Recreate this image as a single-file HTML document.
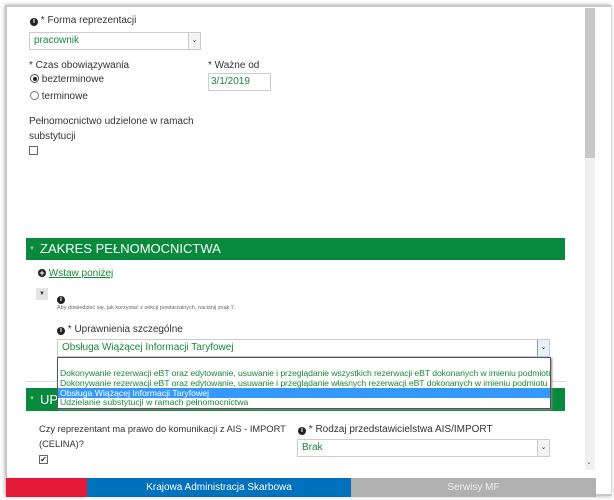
<!DOCTYPE html>
<html><head><meta charset="utf-8"><style>
*{margin:0;padding:0;box-sizing:border-box}
body{width:614px;height:500px;background:#fff;position:relative;overflow:hidden;font-family:"Liberation Sans",Arial,sans-serif;font-size:10px;color:#333}
.a{position:absolute;white-space:nowrap}
.frame{left:5px;top:5px;width:606px;height:491px;border:2px solid #c8c8c8;border-right:none;box-shadow:0 0 4px #aaa}
.info{display:inline-block;width:8px;height:8px;border-radius:50%;background:#222;color:#fff;font-size:7px;line-height:8px;text-align:center;font-weight:bold;vertical-align:0}
.sel{border:1px solid #ccc;background:#fff;color:#1a8a3a;padding-left:4px;line-height:16px}
.arr{position:absolute;right:0;top:0;width:12px;height:100%;border-left:1px solid #ccc;background:#f4f4f4;font-size:7px;text-align:center;color:#333}
.bar{background:#078a3c;color:#fff;font-size:13px;line-height:22px;padding-left:14px}
.g{color:#1a8a3a}
</style></head><body>
<div class="a frame"></div>
<div class="a" style="left:30px;top:15px"><span class="info">i</span> * Forma reprezentacji</div>
<div class="a sel" style="left:29px;top:32px;width:172px;height:18px">pracownik<div class="arr">&#8964;</div></div>
<div class="a" style="left:29px;top:60px">* Czas obowiązywania</div>
<div class="a" style="left:30px;top:74px"><span style="display:inline-block;width:9px;height:9px;border:1px solid #555;border-radius:50%;position:relative;vertical-align:-1px"><span style="position:absolute;left:1.5px;top:1.5px;width:4px;height:4px;border-radius:50%;background:#222"></span></span> bezterminowe</div>
<div class="a" style="left:30px;top:91px"><span style="display:inline-block;width:9px;height:9px;border:1px solid #777;border-radius:50%;vertical-align:-1px"></span> terminowe</div>
<div class="a" style="left:208px;top:60px">* Ważne od</div>
<div class="a sel" style="left:208px;top:73px;width:63px;height:18px;padding-left:2px">3/1/2019</div>
<div class="a" style="left:29px;top:114px;line-height:15px">Pełnomocnictwo udzielone w ramach<br>substytucji</div>
<div class="a" style="left:29px;top:146px;width:9px;height:9px;border:1px solid #666"></div>
<div class="a bar" style="left:26px;top:238px;width:539px;height:22px"><span style="font-size:6px;color:#9c9;position:absolute;left:3px">&#9660;</span>ZAKRES PEŁNOMOCNICTWA</div>
<div class="a" style="left:38px;top:268px"><span class="info" style="font-size:9px">+</span> <span class="g" style="text-decoration:underline">Wstaw poniżej</span></div>
<div class="a" style="left:36px;top:288px;width:12px;height:12px;background:#e4e4e4;font-size:6px;text-align:center;line-height:12px">&#9660;</div>
<div class="a" style="left:57px;top:293px"><span class="info">i</span></div>
<div class="a" style="left:57px;top:305px;font-size:5.5px;color:#666">Aby dowiedzieć się, jak korzystać z sekcji powtarzalnych, naciśnij znak 'i'.</div>
<div class="a" style="left:57px;top:324px"><span class="info">i</span> * Uprawnienia szczególne</div>
<div class="a sel" style="left:57px;top:339px;width:493px;height:18px;line-height:16px">Obsługa Wiążącej Informacji Taryfowej<div class="arr" style="background:#e8f0ff;border-color:#7aa">&#8964;</div></div>
<div class="a" style="left:26px;top:381px;width:540px;border-top:1px solid #ddd"></div>
<div class="a" style="left:26px;top:388px;width:539px;height:23px;background:#078a3c;color:#fff;font-size:13px;line-height:23px;padding-left:14px"><span style="font-size:6px;color:#9c9;position:absolute;left:3px">&#9660;</span>UP</div>
<div class="a" style="left:57px;top:357px;width:494px;height:52px;background:#fff;border:1px solid #555;color:#1a8a3a;font-size:8.7px;line-height:9.5px;padding-top:11px;box-shadow:1px 1px 2px #888;overflow:hidden">
<div style="padding-left:2px;letter-spacing:-0.1px">Dokonywanie rezerwacji eBT oraz edytowanie, usuwanie i przeglądanie wszystkich rezerwacji eBT dokonanych w imieniu podmiotu</div>
<div style="padding-left:2px;letter-spacing:-0.1px">Dokonywanie rezerwacji eBT oraz edytowanie, usuwanie i przeglądanie własnych rezerwacji eBT dokonanych w imieniu podmiotu</div>
<div style="padding-left:2px;background:#3399ff;color:#fff;height:10px;line-height:10px">Obsługa Wiążącej Informacji Taryfowej</div>
<div style="padding-left:2px">Udzielanie substytucji w ramach pełnomocnictwa</div>
</div>
<div class="a" style="left:39px;top:422px;line-height:15px;font-size:9.3px">Czy reprezentant ma prawo do komunikacji z AIS - IMPORT<br>(CELINA)?</div>
<div class="a" style="left:39px;top:455px;width:9px;height:9px;border:1px solid #666;font-size:8px;line-height:7px;text-align:center">&#10004;</div>
<div class="a" style="left:298px;top:424px"><span class="info">i</span> * Rodzaj przedstawicielstwa AIS/IMPORT</div>
<div class="a sel" style="left:297px;top:439px;width:253px;height:18px">Brak<div class="arr">&#8964;</div></div>
<div class="a" style="left:585px;top:8px;width:10px;height:462px;background:#f0f0f0"></div>
<div class="a" style="left:585px;top:8px;width:10px;height:150px;background:#c8c8c8"></div>
<div class="a" style="left:586px;top:458px;font-size:7px;color:#666">&#8964;</div>
<div class="a" style="left:6px;top:478px;width:81px;height:19px;background:#e31937"></div>
<div class="a" style="left:87px;top:478px;width:264px;height:19px;background:#0071bc;color:#fff;text-align:center;line-height:19px;font-size:10px">Krajowa Administracja Skarbowa</div>
<div class="a" style="left:351px;top:478px;width:245px;height:19px;background:#b0b0b0;color:#eee;text-align:center;line-height:19px;font-size:10px">Serwisy MF</div>
</body></html>
